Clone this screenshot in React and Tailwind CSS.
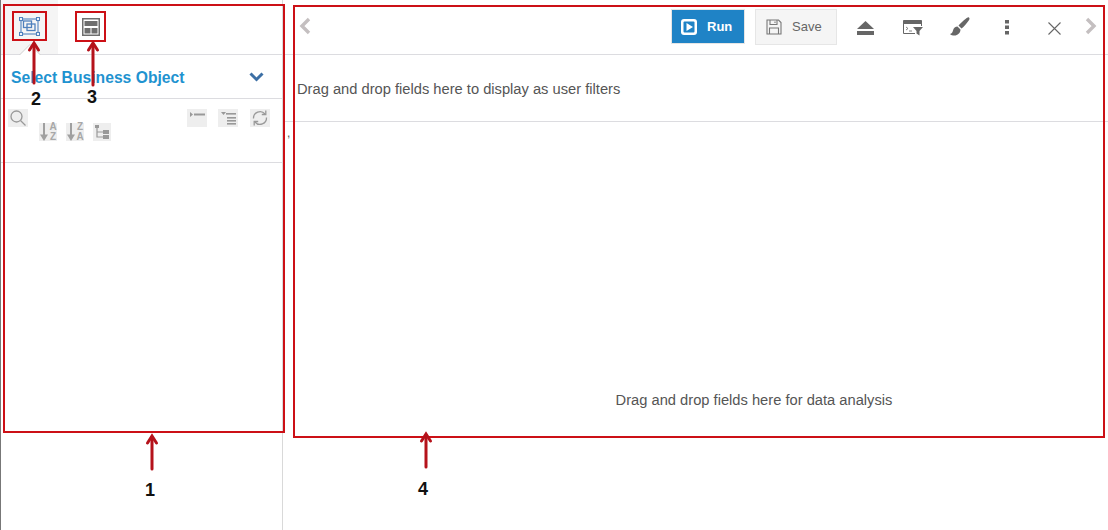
const Box = ({ className }) => (
  <div className={`absolute border-2 border-[#cc1016] pointer-events-none ${className}`} />
);

const Arrow = ({ className, height }) => (
  <svg className={`absolute ${className}`} width="14" height={height} viewBox={`0 0 14 ${height}`} fill="none" stroke="#b5121b" strokeWidth="3" strokeLinecap="round" strokeLinejoin="miter">
    <path d={`M7 4V${height - 2}`} />
    <path d="M2.5 10L7 3L11.5 10" />
  </svg>
);

const Label = ({ className, children }) => (
  <span className={`absolute text-[18px] leading-none font-bold text-[#111] ${className}`}>{children}</span>
);

const IconTile = ({ className, children }) => (
  <span className={`flex items-center justify-center bg-[#eeeeee] ${className}`}>{children}</span>
);

const SortIcon = ({ top, bottom }) => (
  <IconTile className="w-[18px] h-[18px] relative">
    <svg width="18" height="18" viewBox="0 0 18 18" fill="none" stroke="#a0a0a0" strokeWidth="2" className="shrink-0">
      <path d="M5 0V13" />
      <path d="M1 11.5L5 18L9 11.5Z" fill="#a0a0a0" stroke="none" />
    </svg>
    <span className="absolute left-[10px] top-[-1px] w-[8px] text-[10px] leading-[10px] font-bold text-[#a8a8a8] text-center">{top}<br />{bottom}</span>
  </IconTile>
);

const LeftPanel = () => (
  <aside className="w-[282px] shrink-0 border-r border-[#d9d9d9] flex flex-col">
    <div className="h-[55px] border-b border-[#dcdce0] flex shrink-0">
      <div className="w-[57px] bg-[#f5f5f5] relative flex items-center justify-center">
        <svg width="21" height="19" viewBox="0 0 21 19" fill="none" stroke="#4f81bd" strokeWidth="1.1" className="mb-[1px]">
          <rect x="2" y="2" width="17" height="15" />
          <rect x="4.5" y="4" width="8" height="6.5" strokeWidth="1.3" />
          <rect x="8" y="7" width="8" height="6.5" strokeWidth="1.3" />
          <rect x="0.5" y="0.5" width="3" height="3" fill="#fff" />
          <rect x="17.5" y="0.5" width="3" height="3" fill="#fff" />
          <rect x="0.5" y="15.5" width="3" height="3" fill="#fff" />
          <rect x="17.5" y="15.5" width="3" height="3" fill="#fff" />
        </svg>
        <svg width="22" height="11" viewBox="0 0 22 11" fill="none" stroke="#cfcfcf" className="absolute left-[18px] bottom-[-1px]">
          <path d="M0.5 11L11 0.5L21.5 11" fill="#fff" />
        </svg>
      </div>
      <div className="ml-[24px] pt-[18px]">
        <svg width="18" height="18" viewBox="0 0 18 18" fill="#6e6e6e">
          <path d="M0 0H18V18H0ZM1.5 1.5V16.5H16.5V1.5Z" fillRule="evenodd" />
          <rect x="2.5" y="3" width="13" height="5" />
          <rect x="2.5" y="10" width="6" height="5.5" />
          <rect x="9.5" y="10" width="6" height="5.5" />
        </svg>
      </div>
    </div>
    <div className="h-[44px] border-b border-[#dcdce0] flex items-center justify-between pl-[10px] pr-[18px] shrink-0">
      <span className="text-[15.7px] font-bold text-[#1f93d0] pt-[3px]">Select Business Object</span>
      <svg width="15" height="10" viewBox="0 0 15 10" fill="none" stroke="#3c6fa5" strokeWidth="3">
        <path d="M1.5 1.5L7.5 7.5L13.5 1.5" />
      </svg>
    </div>
    <div className="h-[64px] border-b border-[#dcdce0] flex justify-between pl-[7px] pr-[12px] pt-[10px] shrink-0">
      <div className="flex items-start">
        <IconTile className="w-[20px] h-[18px]">
          <svg width="18" height="18" viewBox="0 0 18 18" fill="none" stroke="#999" strokeWidth="1.3">
            <circle cx="7.5" cy="7.5" r="5.5" />
            <path d="M11.5 11.5L16.5 16.5" />
          </svg>
        </IconTile>
        <div className="flex gap-[9px] ml-[11px] mt-[14px]">
          <SortIcon top="A" bottom="Z" />
          <SortIcon top="Z" bottom="A" />
          <IconTile className="w-[18px] h-[18px]">
            <svg width="16" height="16" viewBox="0 0 16 16" fill="none" stroke="#999" strokeWidth="1.2">
              <rect x="1" y="1" width="4" height="3" fill="#999" stroke="none" />
              <path d="M3 4V13H9M3 8H9" />
              <rect x="9" y="6" width="6" height="4" fill="#999" stroke="none" />
              <rect x="9" y="11" width="6" height="4" fill="#999" stroke="none" />
            </svg>
          </IconTile>
        </div>
      </div>
      <div className="flex gap-[11px]">
        <IconTile className="w-[20px] h-[18px]">
          <svg width="20" height="18" viewBox="0 0 20 18" fill="#999">
            <path d="M3 3V8L6 5.5Z" />
            <rect x="7" y="4.5" width="11" height="2" />
          </svg>
        </IconTile>
        <IconTile className="w-[20px] h-[18px]">
          <svg width="20" height="18" viewBox="0 0 20 18" fill="#999">
            <path d="M3 3H8L5.5 6Z" />
            <rect x="8" y="4" width="10" height="1.6" />
            <rect x="9" y="8" width="9" height="1.6" />
            <rect x="9" y="11" width="9" height="1.6" />
            <rect x="9" y="14" width="9" height="1.6" />
          </svg>
        </IconTile>
        <IconTile className="w-[20px] h-[18px] ml-[1px]">
          <svg width="18" height="18" viewBox="0 0 18 18" fill="none" stroke="#999" strokeWidth="1.3">
            <path d="M2.5 9.5A6.5 6.5 0 0 1 14 5" />
            <path d="M15.5 8.5A6.5 6.5 0 0 1 4 13" />
            <path d="M14.8 1.5V5.5H10.8" />
            <path d="M3.2 16.5V12.5H7.2" />
          </svg>
        </IconTile>
      </div>
    </div>
  </aside>
);

const Toolbar = () => (
  <div className="h-[55px] border-b border-[#dcdce0] flex items-center shrink-0 pl-[16px] pr-[11px]">
    <svg width="12" height="18" viewBox="0 0 12 18" fill="none" stroke="#c4bfc0" strokeWidth="3.4" className="mb-[2px]">
      <path d="M10 2L3 9L10 16" />
    </svg>
    <div className="ml-auto flex items-center mb-[1px]">
      <button type="button" className="w-[74px] h-[35px] bg-[#1f83c6] border border-[#e5e5e5] flex items-center pl-[9px] gap-[10px] text-[13px] font-bold text-white">
        <svg width="16" height="16" viewBox="0 0 16 16">
          <rect x="0" y="0" width="16" height="16" rx="3" fill="#fff" />
          <rect x="2.5" y="2.5" width="11" height="11" rx="1" fill="#1f83c6" />
          <path d="M5.5 4V12L12 8Z" fill="#fff" />
        </svg>
        Run
      </button>
      <button type="button" className="w-[82px] h-[36px] ml-[10px] bg-[#f5f5f5] border border-[#e6e6e6] flex items-center pl-[10px] gap-[10px] text-[13px] text-[#666]">
        <svg width="16" height="16" viewBox="0 0 16 16" fill="none" stroke="#777" strokeWidth="1.1">
          <path d="M1 1H12.5L15 3.5V15H1Z" />
          <path d="M4 1V5.5H11V1M9 2.5V4M3.5 15V9H12.5V15" />
        </svg>
        Save
      </button>
      <svg width="17" height="14" viewBox="0 0 17 14" fill="#666" className="ml-[20px] mt-[2px]">
        <path d="M8.5 0L17 8H0Z" />
        <rect x="0" y="10" width="17" height="4" />
      </svg>
      <svg width="20" height="16" viewBox="0 0 20 16" fill="none" className="ml-[29px] mt-[2px]">
        <path d="M0.5 0.5H18.5V3.5H0.5Z" fill="#666" stroke="#666" />
        <path d="M0.5 3V13.5H12M18.5 3V6" stroke="#666" />
        <path d="M3 7L5 8.5L3 10M6 11H9" stroke="#666" strokeWidth="0.8" />
        <path d="M10 7H20L16.5 11V15.5L13.5 13.5V11Z" fill="#666" />
      </svg>
      <svg width="20" height="20" viewBox="0 0 20 20" fill="#666" className="ml-[27px]">
        <path d="M19 0.5C20 1.5 19.5 2.5 18 4.5C16 7 13.5 10 11.5 11.5L8.5 8.5C10.5 6.5 13.5 3.5 15.5 2C17 1 18 0 19 0.5Z" />
        <path d="M7.5 9.5L10.5 12.5C10.5 16 7.5 18.5 4.5 18.5C2.5 18.5 1 18 0 17C2 16.5 2.5 15.5 3 13.5C3.5 11 5.5 9.5 7.5 9.5Z" />
      </svg>
      <svg width="6" height="16" viewBox="0 0 6 16" fill="#666" className="ml-[34px] mt-[1px]">
        <rect x="1" y="1" width="4" height="3.5" />
        <rect x="1" y="6.5" width="4" height="3.5" />
        <rect x="1" y="12" width="4" height="3.5" />
      </svg>
      <svg width="13" height="13" viewBox="0 0 13 13" fill="none" stroke="#666" strokeWidth="1.1" className="ml-[38px] mt-[3px]">
        <path d="M0.5 0.5L12.5 12.5M12.5 0.5L0.5 12.5" />
      </svg>
      <svg width="12" height="18" viewBox="0 0 12 18" fill="none" stroke="#c4bfc0" strokeWidth="3.4" className="ml-[24px] mb-[2px]">
        <path d="M2 2L9 9L2 16" />
      </svg>
    </div>
  </div>
);

export default function App() {
  return (
    <div className="relative w-[1108px] h-[530px] overflow-hidden bg-white flex font-['Liberation_Sans',Arial,sans-serif]">
      <div className="w-[1px] bg-[#777] shrink-0" />
      <LeftPanel />
      <main className="flex-1 min-w-0 flex flex-col">
        <Toolbar />
        <div className="h-[67px] border-b border-[#dcdce0] flex items-center pl-[14px] pt-[3px] text-[14.7px] text-[#555] shrink-0">
          Drag and drop fields here to display as user filters
        </div>
        <div className="flex-1 flex justify-center pt-[267px] pl-[117px] text-[14.7px] text-[#555]">
          Drag and drop fields here for data analysis
        </div>
      </main>

      <span className="absolute left-[287px] top-[127px] text-[12px] leading-none text-[#555]">,</span>

      <Box className="left-[3px] top-[4px] w-[282px] h-[429px]" />
      <Box className="left-[12px] top-[11px] w-[35px] h-[30px]" />
      <Box className="left-[75px] top-[11px] w-[31px] h-[31px]" />
      <Box className="left-[293px] top-[5px] w-[812px] h-[433px]" />

      <Arrow className="left-[27px] top-[40px]" height={45} />
      <Arrow className="left-[86px] top-[40px]" height={47} />
      <Arrow className="left-[145px] top-[433px]" height={38} />
      <Arrow className="left-[419px] top-[431px]" height={38} />

      <Label className="left-[31px] top-[90px]">2</Label>
      <Label className="left-[87px] top-[88px]">3</Label>
      <Label className="left-[145px] top-[481px]">1</Label>
      <Label className="left-[418px] top-[480px]">4</Label>
    </div>
  );
}
